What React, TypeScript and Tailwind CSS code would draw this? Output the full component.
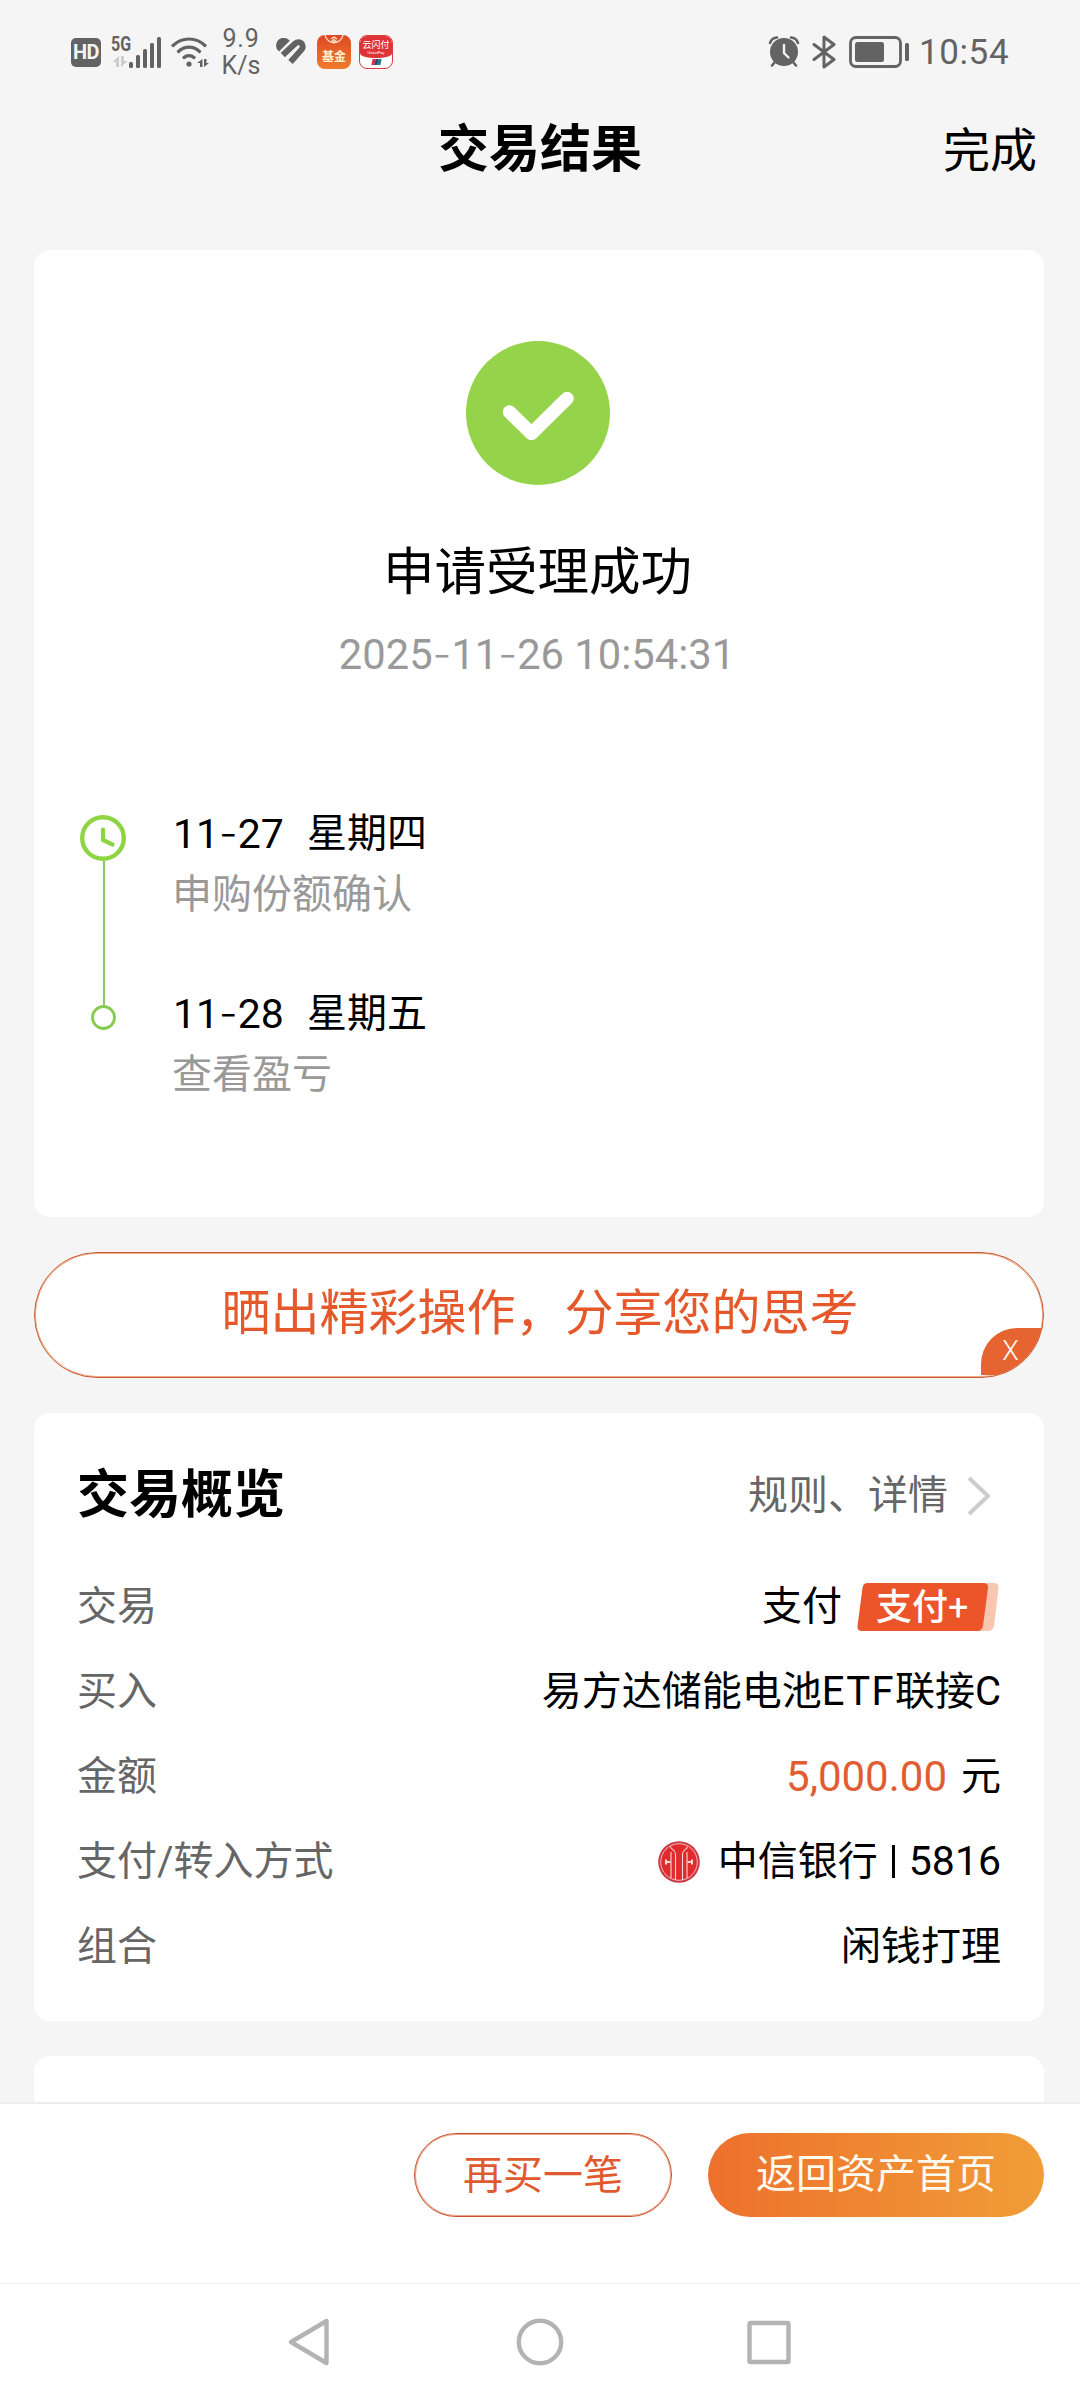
import React from "react";

function Card({
  className,
  children,
}: {
  className: string;
  children?: React.ReactNode;
}) {
  return (
    <section className={`ml-[34px] w-[1010px] shrink-0 bg-white ${className}`}>
      {children}
    </section>
  );
}

// wide hyphen used between the numbers of a date
function Dash() {
  return <span className="font-[Inter] font-light">-</span>;
}

function Arrows({ className }: { className: string }) {
  return (
    <svg viewBox="0 0 16 12" className={className} fill="currentColor">
      <path d="M6.800 0v12H3.800V6.500H0zM9.200 12V0h3v5.500H16z" />
    </svg>
  );
}

function StatusBar() {
  return (
    <div className="flex h-[104px] shrink-0 items-center pl-[71px] pr-[71px] text-[#636363]">
      <div className="flex h-[29px] w-[30px] items-center justify-center rounded-[5px] bg-[#636363] text-[20px] leading-none font-bold tracking-[-0.5px] text-[#f4f4f4]">
        HD
      </div>

      {/* 5G signal */}
      <div className="relative ml-[10px] h-[32px] w-[51px]">
        <span className="absolute top-0 left-0 origin-left scale-x-80 text-[20px] leading-[17px] font-bold">
          5G
        </span>
        <Arrows className="absolute top-[20px] left-[1px] h-[11px] w-[16px] text-[#cbcbcb]" />
        <svg viewBox="0 0 51 32" className="absolute inset-0" fill="currentColor">
          <rect x="18" y="26" width="4" height="6" rx="1.500" />
          <rect x="25" y="19" width="4" height="13" rx="1.500" />
          <rect x="32" y="13" width="4" height="19" rx="1.500" />
          <rect x="39" y="7" width="4" height="25" rx="1.500" />
          <rect x="46" y="1" width="4" height="31" rx="1.500" />
        </svg>
      </div>

      {/* wifi */}
      <svg
        viewBox="0 0 38 32"
        className="ml-[9px] h-[32px] w-[38px]"
        fill="none"
        stroke="currentColor"
        strokeWidth="3.200"
        strokeLinecap="round"
      >
        <path d="M2 9.500a23 23 0 0 1 32 0M7.500 15.500a15 15 0 0 1 21 0M13 21.500a7.500 7.500 0 0 1 10 0" />
        <circle cx="18" cy="28" r="2.600" fill="currentColor" stroke="none" />
        <path
          d="M31.500 23v8h-2.500v-4h-3zM33 31v-8h2.500v4h2.500z"
          fill="currentColor"
          stroke="none"
        />
      </svg>

      <div className="ml-[14px] flex w-[36px] flex-col items-center text-[25px] leading-[27px]">
        <span className="tracking-[0.8px]">9.9</span>
        <span>K/s</span>
      </div>

      {/* health heart */}
      <svg
        viewBox="0 0 31 28"
        className="ml-[17px] h-[28px] w-[31px]"
        fill="none"
        stroke="currentColor"
        strokeWidth="6"
      >
        <path d="M3 13.600A7.700 7.700 0 1 1 13.800 2.800z" fill="currentColor" stroke="none" />
        <path d="M6.800 17 19.500 5.200a4.400 4.400 0 0 1 6.200 6.200L14.500 24" />
      </svg>

      <div className="relative ml-[10px] flex h-[34px] w-[34px] items-end justify-center overflow-hidden rounded-[8px] bg-gradient-to-b from-[#de4824] to-[#f07a2c]">
        <svg
          viewBox="0 0 34 16"
          className="absolute top-0 left-0 w-[34px]"
          fill="none"
          stroke="#ffe9d4"
        >
          <path d="M8 0a9.300 10 0 0 0 18 0" strokeWidth="1.300" />
          <path d="m14 4 3-2 3 2M14.500 6.500l2.500-2 2.500 2M17 6v2.500" strokeWidth="1.200" />
        </svg>
        <span className="pb-[5px] text-[12px] leading-[14px] font-bold text-[#fff3d6]">
          基金
        </span>
      </div>

      <div className="ml-[8px] flex h-[34px] w-[34px] flex-col items-center overflow-hidden rounded-[8px] border border-[#dc3a3c] bg-white">
        <div className="flex h-[22px] w-full shrink-0 flex-col items-center rounded-b-[40%_5px] bg-[#df3437] pt-[4px] text-white">
          <span className="text-[9px] leading-[10px] whitespace-nowrap">云闪付</span>
          <span className="text-[4px] leading-[5px]">UnionPay</span>
        </div>
        <div className="mt-[1px] flex h-[6px] -skew-x-12">
          <i className="w-[3px] bg-[#d22f3b]" />
          <i className="w-[3px] bg-[#24487f]" />
          <i className="w-[3px] bg-[#187c83]" />
        </div>
      </div>

      <div className="ml-auto flex items-center">
        {/* alarm */}
        <svg
          viewBox="0 0 32 32"
          className="h-[32px] w-[32px]"
          fill="none"
          stroke="currentColor"
          strokeLinecap="round"
        >
          <circle cx="16" cy="16" r="14" fill="currentColor" stroke="none" />
          <path
            d="M2 7a8 8 0 0 1 7-5.500M30 7a8 8 0 0 0-7-5.500M6.500 26.500 4 29.500M25.500 26.500l2.500 3"
            strokeWidth="2.600"
          />
          <path d="M16 9v8l4.500 4.500" stroke="#f4f4f4" strokeWidth="2.400" />
        </svg>
        {/* bluetooth */}
        <svg
          viewBox="0 0 24 34"
          className="ml-[12px] h-[34px] w-[24px]"
          fill="none"
          stroke="currentColor"
          strokeWidth="3"
          strokeLinecap="round"
          strokeLinejoin="round"
        >
          <path d="m2 9.500 20 15-10 7.500V2l10 7.500-20 15" />
        </svg>
        {/* battery */}
        <svg viewBox="0 0 61 32" className="ml-[13px] h-[32px] w-[61px]" fill="currentColor">
          <rect
            x="1.500"
            y="1.500"
            width="50"
            height="29"
            rx="5.500"
            fill="none"
            stroke="currentColor"
            strokeWidth="2.800"
          />
          <rect x="6" y="6" width="29" height="20" rx="2.500" />
          <rect x="56" y="7" width="4" height="18" rx="1.500" />
        </svg>
        <span className="ml-[9px] w-[90px] text-[35px] leading-none tracking-[0.6px] whitespace-nowrap">
          10:54
        </span>
      </div>
    </div>
  );
}

function Header() {
  return (
    <header className="grid h-[92px] shrink-0 grid-cols-3 items-center">
      <h1 className="col-start-2 text-center text-[51px] leading-[92px] font-bold">
        交易结果
      </h1>
      <span className="pt-[2px] pr-[43px] text-right text-[47px] leading-[90px]">完成</span>
    </header>
  );
}

const steps = [
  { date: ["11", "27"], day: "星期四", note: "申购份额确认" },
  { date: ["11", "28"], day: "星期五", note: "查看盈亏" },
];

function Timeline() {
  return (
    <div className="mt-[134px] flex pl-[46px]">
      <svg viewBox="0 0 46 216" className="h-[216px] w-[46px]" fill="none">
        <path d="M24 46v144" stroke="#8bc766" strokeWidth="2" />
        <circle cx="23" cy="23" r="20.800" stroke="#8fd443" strokeWidth="4.400" />
        <path
          d="M23 14.500V25l9.500 4.500"
          stroke="#8fd443"
          strokeWidth="4.200"
          strokeLinecap="round"
          strokeLinejoin="round"
        />
        <circle cx="23.500" cy="202.500" r="11" stroke="#86cb4f" strokeWidth="2.800" />
      </svg>
      <div className="ml-[46px]">
        {steps.map((s) => (
          <div key={s.day} className="h-[180px]">
            <div className="flex h-[38px] items-center text-[40px] leading-none whitespace-nowrap">
              <span className="w-[135px] pl-px text-[41px]">
                {s.date[0]}
                <Dash />
                {s.date[1]}
              </span>
              <span>{s.day}</span>
            </div>
            <div className="mt-[21px] text-[40px] leading-[42px] text-[#999]">{s.note}</div>
          </div>
        ))}
      </div>
    </div>
  );
}

function ResultCard() {
  return (
    <Card className="mt-[54px] h-[967px] rounded-[16px]">
      <svg
        viewBox="0 0 144 144"
        className="mx-auto mt-[91px] h-[144px] w-[144px] -translate-x-px"
        fill="none"
      >
        <circle cx="72" cy="72" r="72" fill="#94d34a" />
        <path
          d="m43.500 71 22 21.500L101 57.500"
          stroke="#fff"
          strokeWidth="13.500"
          strokeLinecap="round"
          strokeLinejoin="round"
        />
      </svg>
      <div className="mt-[58px] pr-[3px] text-center text-[51.500px] leading-[60px]">
        申请受理成功
      </div>
      <div className="mt-[25px] pr-[4px] text-center text-[41.700px] leading-[52px] text-[#999]">
        2025
        <Dash />
        11
        <Dash />
        26 10:54:31
      </div>
      <Timeline />
    </Card>
  );
}

function ShareBanner() {
  return (
    <div className="relative mt-[35px] ml-[34px] flex h-[126px] w-[1010px] shrink-0 justify-center overflow-hidden rounded-full border border-[#c9592f] bg-white pl-[2px] text-[49px] leading-[121px] text-[#e4582b] shadow-[inset_0_0_0_1px_#f0ad8c]">
      晒出精彩操作，分享您的思考
      <span className="absolute right-[1px] bottom-[2px] flex h-[47px] w-[61px] items-center justify-center rounded-tl-[36px] bg-[#e66430] pr-[2px] text-[27px] leading-none font-light text-white">
        X
      </span>
    </div>
  );
}

function Row({ label, children }: { label: string; children: React.ReactNode }) {
  return (
    <div className="flex h-[85px] items-center justify-between text-[40px] leading-none">
      <span className="text-[#666]">{label}</span>
      <div className="flex items-center">{children}</div>
    </div>
  );
}

function PayBadge() {
  return (
    <span className="relative mr-[2px] ml-[15px] flex h-[48px] w-[142px] items-center pt-[2px] pl-[19px] text-[36px] text-white">
      <svg viewBox="0 0 142 48" className="absolute inset-0">
        <path d="M20 0H137Q142 0 141.500 5L137 43Q136 48 131 48H20z" fill="#f8c7b1" />
        <path
          d="M11 0H126Q131.500 0 131 5L126 43Q125 48 120 48H5Q0 48 .5 43L5.500 5Q6 0 11 0z"
          fill="#eb5529"
        />
      </svg>
      <span className="relative font-medium">
        支付<span className="font-normal">+</span>
      </span>
    </span>
  );
}

function BankLogo() {
  return (
    <svg
      viewBox="0 0 42 42"
      className="mr-[18px] h-[42px] w-[42px]"
      fill="none"
      stroke="#f7d9d6"
    >
      <circle cx="21" cy="21" r="20.800" fill="#cb3a44" stroke="none" />
      <circle cx="21" cy="21" r="18.300" strokeWidth=".8" fill="#df2b2e" />
      <path
        d="M12.500 5.500c0 3 5 3 5 7.500v26M29.500 5.500c0 3-5 3-5 7.500v26M13 11v26M29 11v26"
        strokeWidth="1.100"
      />
      <path d="M8 18.500v5M8 21h4.500M34 18.500v5M34 21h-4.500" strokeWidth="2" />
    </svg>
  );
}

function OverviewCard() {
  return (
    <Card className="mt-[35px] h-[608px] rounded-[16px] px-[43px]">
      <div className="flex h-[151px] items-center justify-between pt-[14px]">
        <h2 className="text-[52px] leading-none font-bold">交易概览</h2>
        <div className="flex items-center text-[40px] leading-none text-[#666]">
          规则、详情
          <svg
            viewBox="0 0 24 40"
            className="mr-[10px] ml-[19px] h-[40px] w-[24px]"
            fill="none"
          >
            <path d="m2 2 19 18L2 38" stroke="#ccc" strokeWidth="4" />
          </svg>
        </div>
      </div>
      <Row label="交易">
        支付
        <PayBadge />
      </Row>
      <Row label="买入">
        易方达储能电池<span className="tracking-[1.400px]">ETF</span>联接C
      </Row>
      <Row label="金额">
        <span className="mr-[14px] text-[42px] text-[#e15c31]">5,000.00</span>元
      </Row>
      <Row label="支付/转入方式">
        <BankLogo />
        中信银行
        <i className="mr-[14px] ml-[14px] h-[33px] w-[3px] bg-black" />
        <span className="text-[41px]">5816</span>
      </Row>
      <Row label="组合">闲钱打理</Row>
    </Card>
  );
}

function ActionBar() {
  return (
    <div className="flex h-[181px] shrink-0 items-start justify-end gap-[36px] border-t-2 border-[#ededed] bg-white pt-[29px] pr-[36px] text-[40px]">
      <button className="h-[84px] w-[258px] rounded-full border border-[#c9512c] leading-[75px] text-[#e15a2e] shadow-[inset_0_0_0_1px_#eda58b]">
        再买一笔
      </button>
      <button className="h-[84px] w-[336px] rounded-full bg-gradient-to-r from-[#ed702d] to-[#f09d37] leading-[78px] text-[#fffaf0]">
        返回资产首页
      </button>
    </div>
  );
}

function NavBar() {
  return (
    <nav className="flex h-[117px] shrink-0 justify-center border-t border-[#ededed] bg-white">
      <svg
        viewBox="0 0 520 117"
        className="h-[117px] w-[520px]"
        fill="none"
        stroke="#b3b3b3"
        strokeWidth="4.400"
        strokeLinejoin="round"
      >
        <path d="M46.500 37v42L11 58z" />
        <circle cx="260" cy="58" r="21.200" />
        <rect x="469.500" y="39" width="39" height="39" rx="1" />
      </svg>
    </nav>
  );
}

export default function App() {
  return (
    <div className="flex h-[2400px] w-[1080px] flex-col overflow-hidden bg-[#f5f5f5] font-[Roboto,'Noto_Sans_CJK_SC',sans-serif] text-black">
      <StatusBar />
      <Header />
      <ResultCard />
      <ShareBanner />
      <OverviewCard />
      <Card className="mt-[35px] h-[46px] rounded-t-[16px]" />
      <ActionBar />
      <NavBar />
    </div>
  );
}
